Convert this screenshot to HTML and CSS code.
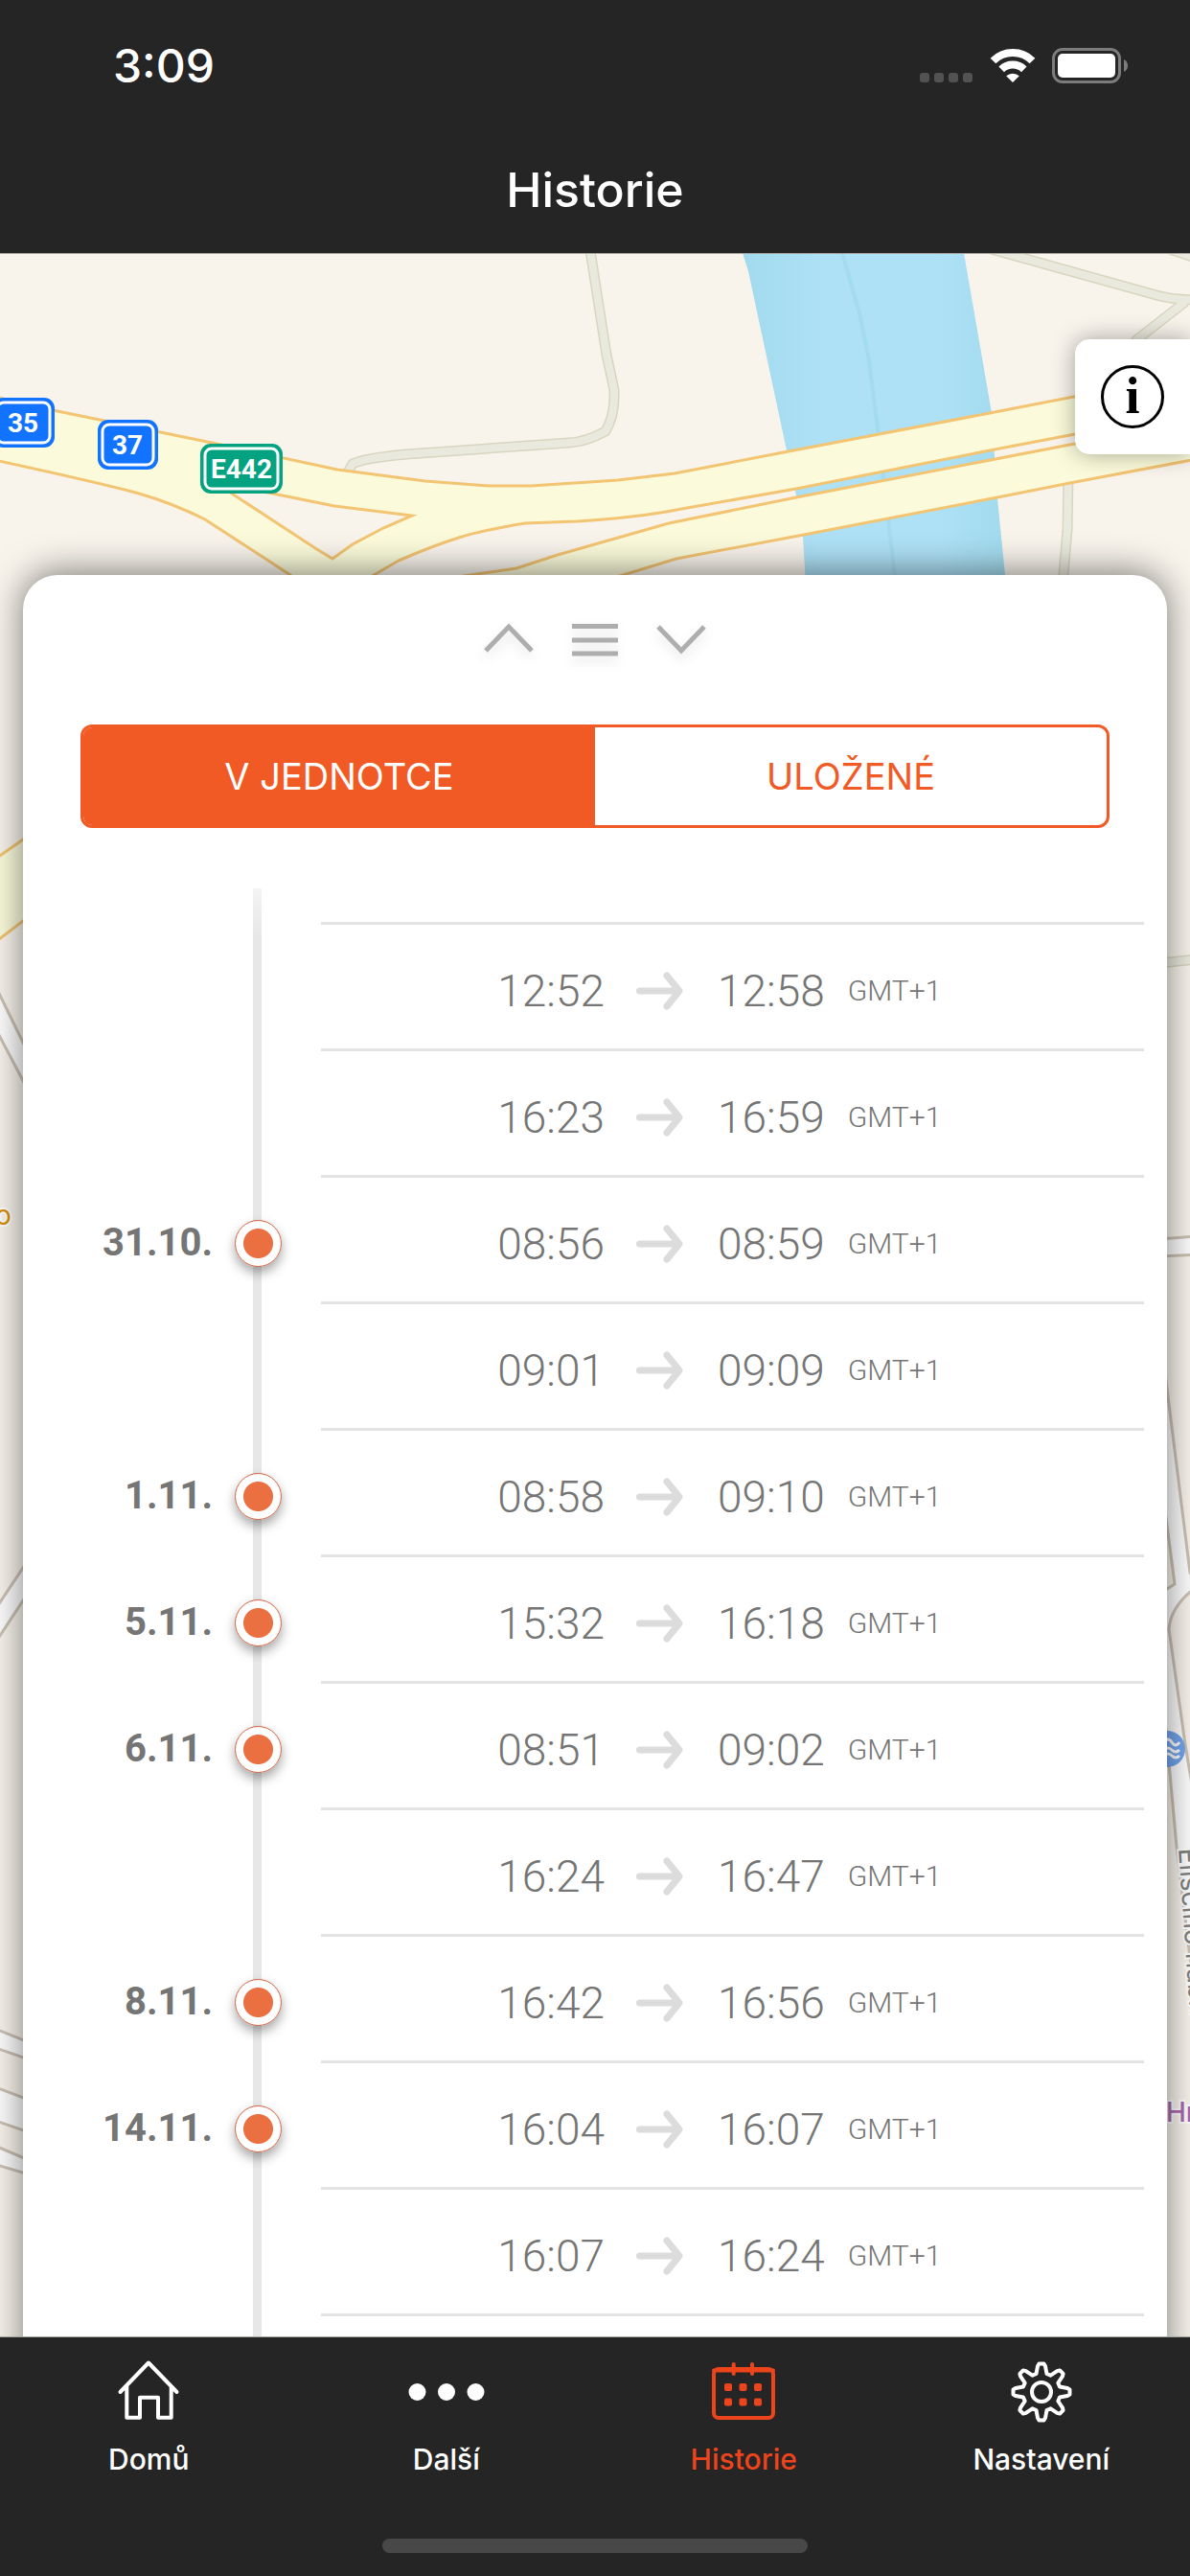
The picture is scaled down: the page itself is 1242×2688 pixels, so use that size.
FILE: index.html
```html
<!DOCTYPE html>
<html lang="cs">
<head>
  <meta charset="UTF-8" />
  <meta name="viewport" content="width=device-width, initial-scale=1" />
  <title>Historie</title>
  <link rel="stylesheet" href="styles.css">
</head>
<body>

  <header class="header">
    <div class="status">
      <span class="clock">3:09</span>
      <svg class="signal" width="56" height="37" viewBox="0 0 56 37">
        <rect x="0" y="26" width="10" height="10" rx="3" />
        <rect x="15" y="26" width="10" height="10" rx="3" />
        <rect x="30" y="26" width="10" height="10" rx="3" />
        <rect x="45" y="26" width="10" height="10" rx="3" />
      </svg>
      <svg class="wifi" width="50" height="37" viewBox="0 0 50 37">
        <path d="M4.500 13.500A29 29 0 0 1 45.500 13.500" />
        <path d="M13.200 22.300A17 17 0 0 1 36.800 22.300" />
        <path class="solid" d="M25 36L18.200 29.300A10 10 0 0 1 31.800 29.300Z" />
      </svg>
      <svg class="battery" width="80" height="37" viewBox="0 0 80 37">
        <rect class="shell" x="1.500" y="1.500" width="69" height="34" rx="9.500" />
        <rect class="charge" x="6" y="6" width="60" height="25" rx="5" />
        <path class="nub" d="M75 12Q79 14 79 18.500T75 25Z" />
      </svg>
    </div>
    <h1 class="title">Historie</h1>
  </header>

  <main class="main">
    <svg class="map" viewBox="0 265 1242 2173" preserveAspectRatio="xMidYMin slice" aria-hidden="true">
      <defs>
        <linearGradient id="water" x1="0" y1="0" x2="1" y2="0">
          <stop offset="0" stop-color="#a2daed" />
          <stop offset="0.3" stop-color="#aee1f6" />
          <stop offset="0.75" stop-color="#aee1f6" />
          <stop offset="1" stop-color="#a2daed" />
        </linearGradient>
      </defs>

      <!-- river -->
      <path fill="url(#water)" d="M775 264L781 283L821 470L831 517L838 560L841 610H1050L1041 520L1035 431L1006 264Z" />
      <path class="stream" d="M879 264L897 327L906 370L916 447L928 550L935 610" />

      <!-- small roads -->
      <g class="lane-edge">
        <path d="M615 255L633 370L641 407Q642 434 632 450Q612 461 594 462L424 474Q380 478 368 484L360 498" />
        <path d="M1020 256L1207 308Q1225 313 1250 313M1237 315L1187 354L1120 440" />
        <path d="M1215 258L1250 270M1115 495L1114 553L1109 610M1210 1005L1250 1001" />
      </g>
      <g class="lane">
        <path d="M615 255L633 370L641 407Q642 434 632 450Q612 461 594 462L424 474Q380 478 368 484L360 498" />
        <path d="M1020 256L1207 308Q1225 313 1250 313M1237 315L1187 354L1120 440" />
        <path d="M1215 258L1250 270M1115 495L1114 553L1109 610M1210 1005L1250 1001" />
      </g>

      <!-- highways -->
      <path class="highway" d="M-10 413L55 428L226 463L352 490L444 502L511 507L554 507L645 501L704 494L823 471L1033 431L1260 387V423L1122 453L1033 470L831 510L706 532Q665 540 602 544L548 546Q505 553 479 561T416 585L385 603V625H330L303 600L214 542Q180 525 145 515T-10 479Z" />
      <path class="island" d="M222 500L242 515L329 572L347 583L368 568L400 551L430 538L349 528L270 512Z" />
      <path class="highway" d="M470 603L539 593L582 579L698 546L831 519L1122 463L1260 433V477L1122 503L1041 519L839 558L706 583L640 603V625H470Z" />
      <path class="highway" d="M-10 900L24 876L40 865V950L24 961L-10 987Z" />

      <!-- streets at the sides -->
      <g class="street">
        <path d="M-10 1018L30 1100V1139L-10 1063Z" />
        <path d="M-10 1687L30 1627V1661L-10 1722Z" />
        <path d="M-10 2115L30 2131V2149L-10 2135Z" />
        <path d="M-10 2176L30 2191V2225L-10 2211Z" />
        <path d="M-10 2237L30 2254V2269L-10 2257Z" />
        <path d="M1210 1293L1250 1290V1309L1210 1311Z" />
        <path d="M1210 1385L1242 1641L1250 1655Q1222 1675 1220 1700L1237 1820L1255 1930V2150L1228 1927L1210 1730V1663L1226 1653L1210 1530Z" />
      </g>

      <!-- places -->
      <circle class="pool" cx="1218" cy="1825" r="19" />
      <path class="waves" d="M1215 1818Q1219 1812 1223 1818T1231 1818M1215 1826Q1219 1822 1223 1826T1231 1826M1215 1832Q1219 1828 1223 1832T1231 1832" />
      <text class="place orange" x="-5" y="1278">o</text>
      <text class="place grey" transform="translate(1230 1929) rotate(86)">Eliščino nábř.</text>
      <text class="place purple" x="1217" y="2214">Hr</text>

      <!-- road numbers -->
      <g class="shield blue">
        <rect class="plate" x="-8" y="415" width="65" height="52" rx="11" />
        <rect class="frame" x="-3" y="420" width="55" height="42" rx="7" />
        <text x="24" y="451">35</text>
      </g>
      <g class="shield blue">
        <rect class="plate" x="102" y="438" width="63" height="52" rx="11" />
        <rect class="frame" x="107" y="443" width="53" height="42" rx="7" />
        <text x="133" y="474">37</text>
      </g>
      <g class="shield green">
        <rect class="plate" x="209" y="463" width="86" height="52" rx="11" />
        <rect class="frame" x="214" y="468" width="76" height="42" rx="7" />
        <text x="252" y="499">E442</text>
      </g>
    </svg>

    <button class="info" type="button" aria-label="Informace"><span class="info-ring">i</span></button>

    <section class="sheet">
      <div class="handle">
        <button class="handle-btn" type="button" aria-label="Nahoru">
          <svg width="52" height="36" viewBox="0 0 52 36"><path d="M2 30L26 5L50 30" /></svg>
        </button>
        <button class="handle-btn" type="button" aria-label="Střed">
          <svg width="48" height="36" viewBox="0 0 48 36"><path d="M0 4.500H48M0 19H48M0 33H48" /></svg>
        </button>
        <button class="handle-btn" type="button" aria-label="Dolů">
          <svg width="52" height="36" viewBox="0 0 52 36"><path d="M2 5L26 30L50 5" /></svg>
        </button>
      </div>

      <div class="segments">
        <button class="segment active" type="button">V JEDNOTCE</button>
        <button class="segment" type="button">ULOŽENÉ</button>
      </div>

      <ol class="timeline">
        <li class="row">
          <span class="date"></span><span class="marker"></span>
          <div class="entry"><time class="start">12:52</time><svg class="arrow" viewBox="0 0 50 40"><path d="M3.500 20H44M32 4L45 20L32 36" /></svg><time class="end">12:58</time><span class="zone">GMT+1</span></div>
        </li>
        <li class="row">
          <span class="date"></span><span class="marker"></span>
          <div class="entry"><time class="start">16:23</time><svg class="arrow" viewBox="0 0 50 40"><path d="M3.500 20H44M32 4L45 20L32 36" /></svg><time class="end">16:59</time><span class="zone">GMT+1</span></div>
        </li>
        <li class="row">
          <span class="date">31.10.</span><span class="marker dot"></span>
          <div class="entry"><time class="start">08:56</time><svg class="arrow" viewBox="0 0 50 40"><path d="M3.500 20H44M32 4L45 20L32 36" /></svg><time class="end">08:59</time><span class="zone">GMT+1</span></div>
        </li>
        <li class="row">
          <span class="date"></span><span class="marker"></span>
          <div class="entry"><time class="start">09:01</time><svg class="arrow" viewBox="0 0 50 40"><path d="M3.500 20H44M32 4L45 20L32 36" /></svg><time class="end">09:09</time><span class="zone">GMT+1</span></div>
        </li>
        <li class="row">
          <span class="date">1.11.</span><span class="marker dot"></span>
          <div class="entry"><time class="start">08:58</time><svg class="arrow" viewBox="0 0 50 40"><path d="M3.500 20H44M32 4L45 20L32 36" /></svg><time class="end">09:10</time><span class="zone">GMT+1</span></div>
        </li>
        <li class="row">
          <span class="date">5.11.</span><span class="marker dot"></span>
          <div class="entry"><time class="start">15:32</time><svg class="arrow" viewBox="0 0 50 40"><path d="M3.500 20H44M32 4L45 20L32 36" /></svg><time class="end">16:18</time><span class="zone">GMT+1</span></div>
        </li>
        <li class="row">
          <span class="date">6.11.</span><span class="marker dot"></span>
          <div class="entry"><time class="start">08:51</time><svg class="arrow" viewBox="0 0 50 40"><path d="M3.500 20H44M32 4L45 20L32 36" /></svg><time class="end">09:02</time><span class="zone">GMT+1</span></div>
        </li>
        <li class="row">
          <span class="date"></span><span class="marker"></span>
          <div class="entry"><time class="start">16:24</time><svg class="arrow" viewBox="0 0 50 40"><path d="M3.500 20H44M32 4L45 20L32 36" /></svg><time class="end">16:47</time><span class="zone">GMT+1</span></div>
        </li>
        <li class="row">
          <span class="date">8.11.</span><span class="marker dot"></span>
          <div class="entry"><time class="start">16:42</time><svg class="arrow" viewBox="0 0 50 40"><path d="M3.500 20H44M32 4L45 20L32 36" /></svg><time class="end">16:56</time><span class="zone">GMT+1</span></div>
        </li>
        <li class="row">
          <span class="date">14.11.</span><span class="marker dot"></span>
          <div class="entry"><time class="start">16:04</time><svg class="arrow" viewBox="0 0 50 40"><path d="M3.500 20H44M32 4L45 20L32 36" /></svg><time class="end">16:07</time><span class="zone">GMT+1</span></div>
        </li>
        <li class="row">
          <span class="date"></span><span class="marker"></span>
          <div class="entry"><time class="start">16:07</time><svg class="arrow" viewBox="0 0 50 40"><path d="M3.500 20H44M32 4L45 20L32 36" /></svg><time class="end">16:24</time><span class="zone">GMT+1</span></div>
        </li>
      </ol>
    </section>
  </main>

  <footer class="footer">
    <nav class="tabs">
      <a class="tab" href="#domu">
        <svg width="72" height="72" viewBox="0 0 72 72"><path d="M6.500 36L36 5.500L65.500 36M13.300 30V62.700H27V41.700H46V62.700H59.700V30" /></svg>
        <span>Domů</span>
      </a>
      <a class="tab" href="#dalsi">
        <svg width="80" height="72" viewBox="0 0 80 72"><g class="solid"><circle cx="9.500" cy="36" r="9" /><circle cx="40" cy="36" r="9" /><circle cx="70.500" cy="36" r="9" /></g></svg>
        <span>Další</span>
      </a>
      <a class="tab active" href="#historie">
        <svg width="72" height="72" viewBox="0 0 72 72">
          <rect x="5" y="12" width="62" height="51" rx="5" />
          <path d="M5 13.500H67M25.700 7V17M45 7V17" />
          <g class="solid">
            <rect x="16" y="27" width="8" height="8" rx="2" /><rect x="31.500" y="27" width="8" height="8" rx="2" /><rect x="47" y="27" width="8" height="8" rx="2" />
            <rect x="16" y="42.500" width="8" height="8" rx="2" /><rect x="31.500" y="42.500" width="8" height="8" rx="2" /><rect x="47" y="42.500" width="8" height="8" rx="2" />
          </g>
        </svg>
        <span>Historie</span>
      </a>
      <a class="tab" href="#nastaveni">
        <svg width="72" height="72" viewBox="-36 -36 72 72">
          <path d="M-5.500-19L-4-27L-2.500-29.500H2.500L4-27L5.500-19L9.500-17.300L16.300-21.900L19.100-22.600L22.600-19.100L21.900-16.300L17.300-9.500L19-5.500L27-4L29.500-2.500V2.500L27 4L19 5.500L17.300 9.500L21.900 16.300L22.600 19.100L19.100 22.600L16.300 21.900L9.500 17.300L5.500 19L4 27L2.500 29.500H-2.500L-4 27L-5.500 19L-9.500 17.300L-16.300 21.900L-19.100 22.600L-22.600 19.100L-21.900 16.300L-17.300 9.500L-19 5.500L-27 4L-29.500 2.500V-2.500L-27-4L-19-5.500L-17.300-9.500L-21.900-16.300L-22.600-19.100L-19.100-22.600L-16.300-21.900L-9.500-17.300Z" />
          <circle cx="0" cy="0" r="10" />
        </svg>
        <span>Nastavení</span>
      </a>
    </nav>
    <div class="home-bar"></div>
  </footer>

</body>
</html>
```
FILE: styles.css
```css
* {
  box-sizing: border-box;
}

body {
  margin: 0;
  min-height: 100vh;
  display: flex;
  flex-direction: column;
  background-color: #f8f4ec;
  font-family: Inter, "Liberation Sans", sans-serif;
}

button {
  margin: 0;
  padding: 0;
  border: none;
  background: none;
  font-family: inherit;
  cursor: pointer;
}

/* header */

.header {
  height: 265px;
  background-color: #252525;
  border-bottom: 1px solid #a3a09b;
  color: white;
}

.status {
  display: flex;
  align-items: center;
  height: 136px;
  padding: 0 64px 0 118px;
}

.clock {
  margin-right: auto;
  font-size: 48px;
  font-weight: 500;
}

.signal {
  margin-right: 16px;
  fill: #525252;
}

.wifi {
  margin-right: 16px;
  fill: none;
  stroke: white;
  stroke-width: 8;
}

.wifi .solid {
  fill: white;
  stroke: none;
}

.shell {
  fill: none;
  stroke: #7c7c7c;
  stroke-width: 3;
}

.charge {
  fill: white;
}

.nub {
  fill: #7c7c7c;
}

.title {
  margin: 0;
  padding-top: 32px;
  font-size: 50px;
  line-height: 60px;
  font-weight: 500;
  text-align: center;
}

/* map */

.main {
  flex: 1;
  display: flex;
  flex-direction: column;
  position: relative;
  overflow: hidden;
  padding: 89px 24px 0;
}

.map {
  position: absolute;
  top: 0;
  left: 0;
  width: 100%;
  height: 100%;
}

.stream {
  fill: none;
  stroke: #a5dbee;
  stroke-width: 4;
}

.lane,
.lane-edge {
  fill: none;
  stroke-linejoin: round;
}

.lane-edge {
  stroke: #d8d5c0;
  stroke-width: 11;
}

.lane {
  stroke: #e9e9dd;
  stroke-width: 8;
}

.highway {
  fill: #fbfbdb;
  stroke: #f3c472;
  stroke-width: 3;
}

.island {
  fill: #f8f4ec;
  stroke: #f3c472;
  stroke-width: 3;
}

.street {
  fill: #fdfdfd;
  stroke: #cbc1b4;
  stroke-width: 3;
}

.pool {
  fill: #74a6ee;
}

.waves {
  fill: none;
  stroke: white;
  stroke-width: 3;
}

.place {
  font-family: Inter, sans-serif;
  font-size: 28px;
  stroke: white;
  stroke-width: 4;
  paint-order: stroke;
}

.orange {
  fill: #d98e04;
}

.grey {
  fill: #808080;
}

.purple {
  fill: #ab6aad;
  font-weight: 500;
}

.shield text {
  fill: white;
  font-family: Roboto, sans-serif;
  font-size: 28px;
  font-weight: 700;
  text-anchor: middle;
}

.frame {
  fill: none;
  stroke: white;
  stroke-width: 3;
}

.blue .plate {
  fill: #1173ff;
}

.green .plate {
  fill: #03a281;
}

.info {
  position: relative;
  align-self: flex-end;
  display: flex;
  align-items: center;
  justify-content: center;
  width: 120px;
  height: 120px;
  margin-right: -24px;
  border-radius: 15px 0 0 15px;
  background-color: white;
  box-shadow: 0 0 24px rgba(0, 0, 0, 0.35);
}

.info-ring {
  width: 66px;
  height: 66px;
  border: 3px solid black;
  border-radius: 50%;
  color: black;
  font-family: "Liberation Serif", serif;
  font-size: 54px;
  font-weight: 700;
  line-height: 58px;
}

/* sheet */

/* runs on below the tab bar so that its shadow keeps an even width */
.sheet {
  position: relative;
  flex: 1;
  margin-top: 126px;
  margin-bottom: -48px;
  border-radius: 36px 36px 0 0;
  background-color: white;
  box-shadow: 0 -3px 36px rgba(0, 0, 0, 0.5);
}

.handle {
  display: flex;
  justify-content: center;
  gap: 40px;
  padding: 49px 0 71px;
}

.handle-btn {
  height: 36px;
}

.handle-btn svg {
  display: block;
  fill: none;
  stroke: #aeaeae;
  stroke-width: 5;
  filter: drop-shadow(0 6px 6px rgba(0, 0, 0, 0.1));
}

.segments {
  display: flex;
  height: 108px;
  margin: 0 60px;
  border: 3px solid #f15a24;
  border-radius: 12px;
  overflow: hidden;
}

.segment {
  flex: 1;
  color: #f15a24;
  font-size: 38px;
}

.segment.active {
  background-color: #f15a24;
  color: white;
}

.timeline {
  margin: 63px 0 0;
  padding: 35px 24px 69px 0;
  list-style: none;
  color: #757575;
  font-family: Roboto, sans-serif;
  background-image: linear-gradient(to bottom, #f4f4f4, #e7e7e7 50px);
  background-repeat: no-repeat;
  background-size: 9px 100%;
  background-position: 240px 0;
}

.row {
  display: grid;
  grid-template-columns: 198px 94px 1fr;
  align-items: center;
  height: 132px;
}

.row:last-child {
  height: 135px;
}

.date {
  padding-top: 8px;
  font-size: 40px;
  font-weight: 700;
  text-align: right;
}

.marker {
  justify-self: center;
}

.dot {
  width: 49px;
  height: 49px;
  margin-top: 11px;
  border: 1px solid #d2603a;
  border-radius: 50%;
  background: radial-gradient(circle, #ea6f41 15px, white 16px);
  box-shadow: 0 6px 12px rgba(0, 0, 0, 0.35);
}

.entry {
  display: flex;
  align-items: center;
  height: 100%;
  margin-left: 19px;
  padding-top: 8px;
  border-top: 3px solid #e3e3e3;
}

.row:last-child .entry {
  border-bottom: 3px solid #e3e3e3;
}

.start,
.end {
  font-size: 46px;
  font-weight: 300;
}

.start {
  width: 296px;
  text-align: right;
}

.arrow {
  width: 50px;
  height: 40px;
  margin: 0 35px 0 33px;
  fill: none;
  stroke: #dcdcdc;
  stroke-width: 7;
  stroke-linecap: round;
  stroke-linejoin: round;
}

.zone {
  margin-left: 24px;
  font-size: 30px;
  font-weight: 300;
}

/* tabs */

.footer {
  height: 250px;
  border-top: 1px solid #9fa49c;
  background-color: #252525;
}

.tabs {
  display: flex;
  height: 210px;
  padding-top: 21px;
}

.tab {
  flex: 1;
  display: flex;
  flex-direction: column;
  align-items: center;
  gap: 14px;
  color: white;
  font-size: 30px;
  font-weight: 500;
  line-height: 40px;
  text-decoration: none;
}

.tab.active {
  color: #ee441c;
}

.tab svg {
  fill: none;
  stroke: currentColor;
  stroke-width: 4;
  stroke-linecap: round;
  stroke-linejoin: round;
}

.tab .solid {
  fill: currentColor;
  stroke: none;
}

.home-bar {
  width: 444px;
  height: 15px;
  margin: 0 auto;
  border-radius: 8px;
  background-color: #484848;
}
```
